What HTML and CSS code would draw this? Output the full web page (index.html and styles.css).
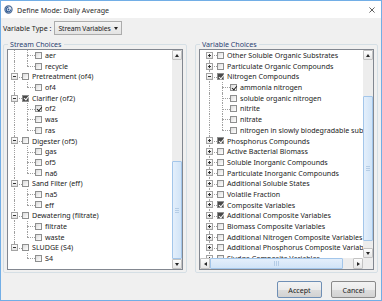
FILE: index.html
```html
<!DOCTYPE html>
<html lang="en">
<head>
  <meta charset="UTF-8">
  <meta name="viewport" content="width=device-width, initial-scale=1.0">
  <title>Define Mode: Daily Average</title>
  <link rel="stylesheet" href="styles.css">
</head>
<body>
  <div class="window">
    <div class="titlebar">
      <svg class="app-icon" viewBox="0 0 9 9">
        <circle cx="4.5" cy="4.5" r="3.6" fill="#dfe7f1" stroke="#4d6d99" stroke-width="1.2"/>
        <path d="M4.5 2.2 A2.3 2.3 0 1 0 6.8 4.5" fill="none" stroke="#2f5a94" stroke-width="1.1"/>
        <circle cx="4.5" cy="4.5" r="0.9" fill="#2f5a94"/>
      </svg>
      <span class="title">Define Mode: Daily Average</span>
      <svg class="close" viewBox="0 0 7 7">
        <path d="M0.5 0.5 L6.5 6.5 M6.5 0.5 L0.5 6.5" stroke="#333" stroke-width="0.9"/>
      </svg>
    </div>

    <div class="content">
      <div class="type-row">
        <span>Variable Type :</span>
        <div class="combo">
          <span class="combo-text">Stream Variables</span>
          <span class="combo-arrow"></span>
        </div>
      </div>

      <div class="panels">
        <fieldset class="group stream">
          <legend>Stream Choices</legend>
          <div class="listbox">
            <div class="tree">
              <div class="row"><i class="ln pass"></i><i class="ln tee"></i><b class="cb"></b><span>aer</span></div>
              <div class="row"><i class="ln pass"></i><i class="ln ell"></i><b class="cb"></b><span>recycle</span></div>
              <div class="row"><i class="ln tee"><i class="exp"></i></i><b class="cb"></b><span>Pretreatment (of4)</span></div>
              <div class="row"><i class="ln pass"></i><i class="ln ell"></i><b class="cb"></b><span>of4</span></div>
              <div class="row"><i class="ln tee"><i class="exp"></i></i><b class="cb full"></b><span>Clarifier (of2)</span></div>
              <div class="row"><i class="ln pass"></i><i class="ln tee"></i><b class="cb on"></b><span>of2</span></div>
              <div class="row"><i class="ln pass"></i><i class="ln tee"></i><b class="cb"></b><span>was</span></div>
              <div class="row"><i class="ln pass"></i><i class="ln ell"></i><b class="cb"></b><span>ras</span></div>
              <div class="row"><i class="ln tee"><i class="exp"></i></i><b class="cb"></b><span>Digester (of5)</span></div>
              <div class="row"><i class="ln pass"></i><i class="ln tee"></i><b class="cb"></b><span>gas</span></div>
              <div class="row"><i class="ln pass"></i><i class="ln tee"></i><b class="cb"></b><span>of5</span></div>
              <div class="row"><i class="ln pass"></i><i class="ln ell"></i><b class="cb"></b><span>na6</span></div>
              <div class="row"><i class="ln tee"><i class="exp"></i></i><b class="cb"></b><span>Sand Filter (eff)</span></div>
              <div class="row"><i class="ln pass"></i><i class="ln tee"></i><b class="cb"></b><span>na5</span></div>
              <div class="row"><i class="ln pass"></i><i class="ln ell"></i><b class="cb"></b><span>eff</span></div>
              <div class="row"><i class="ln tee"><i class="exp"></i></i><b class="cb"></b><span>Dewatering (filtrate)</span></div>
              <div class="row"><i class="ln pass"></i><i class="ln tee"></i><b class="cb"></b><span>filtrate</span></div>
              <div class="row"><i class="ln pass"></i><i class="ln ell"></i><b class="cb"></b><span>waste</span></div>
              <div class="row"><i class="ln ell"><i class="exp"></i></i><b class="cb"></b><span>SLUDGE (S4)</span></div>
              <div class="row"><i class="ln"></i><i class="ln ell"></i><b class="cb"></b><span>S4</span></div>
            </div>
            <div class="vscroll">
              <span class="sb-btn up"></span>
              <span class="track">
                <span class="spacer"></span>
                <span class="thumb stream-thumb"></span>
              </span>
              <span class="sb-btn down"></span>
            </div>
          </div>
        </fieldset>

        <fieldset class="group variable">
          <legend>Variable Choices</legend>
          <div class="listbox grid">
            <div class="tree indent">
              <div class="row"><i class="ln first"><i class="exp plus"></i></i><b class="cb"></b><span>Other Soluble Organic Substrates</span></div>
              <div class="row"><i class="ln tee"><i class="exp plus"></i></i><b class="cb"></b><span>Particulate Organic Compounds</span></div>
              <div class="row"><i class="ln tee"><i class="exp"></i></i><b class="cb full"></b><span>Nitrogen Compounds</span></div>
              <div class="row"><i class="ln pass"></i><i class="ln tee"></i><b class="cb on"></b><span>ammonia nitrogen</span></div>
              <div class="row"><i class="ln pass"></i><i class="ln tee"></i><b class="cb"></b><span>soluble organic nitrogen</span></div>
              <div class="row"><i class="ln pass"></i><i class="ln tee"></i><b class="cb"></b><span>nitrite</span></div>
              <div class="row"><i class="ln pass"></i><i class="ln tee"></i><b class="cb"></b><span>nitrate</span></div>
              <div class="row"><i class="ln pass"></i><i class="ln ell"></i><b class="cb"></b><span>nitrogen in slowly biodegradable substrate</span></div>
              <div class="row"><i class="ln tee"><i class="exp plus"></i></i><b class="cb full"></b><span>Phosphorus Compounds</span></div>
              <div class="row"><i class="ln tee"><i class="exp plus"></i></i><b class="cb"></b><span>Active Bacterial Biomass</span></div>
              <div class="row"><i class="ln tee"><i class="exp plus"></i></i><b class="cb"></b><span>Soluble Inorganic Compounds</span></div>
              <div class="row"><i class="ln tee"><i class="exp plus"></i></i><b class="cb"></b><span>Particulate Inorganic Compounds</span></div>
              <div class="row"><i class="ln tee"><i class="exp plus"></i></i><b class="cb"></b><span>Additional Soluble States</span></div>
              <div class="row"><i class="ln tee"><i class="exp plus"></i></i><b class="cb"></b><span>Volatile Fraction</span></div>
              <div class="row"><i class="ln tee"><i class="exp plus"></i></i><b class="cb full"></b><span>Composite Variables</span></div>
              <div class="row"><i class="ln tee"><i class="exp plus"></i></i><b class="cb full"></b><span>Additional Composite Variables</span></div>
              <div class="row"><i class="ln tee"><i class="exp plus"></i></i><b class="cb"></b><span>Biomass Composite Variables</span></div>
              <div class="row"><i class="ln tee"><i class="exp plus"></i></i><b class="cb"></b><span>Additional Nitrogen Composite Variables</span></div>
              <div class="row"><i class="ln tee"><i class="exp plus"></i></i><b class="cb"></b><span>Additional Phosphorus Composite Variables</span></div>
              <div class="row"><i class="ln tee"><i class="exp plus"></i></i><b class="cb"></b><span>Sludge Composite Variables</span></div>
            </div>
            <div class="vscroll">
              <span class="sb-btn up"></span>
              <span class="track">
                <span class="spacer var-gap"></span>
                <span class="thumb var-thumb"></span>
              </span>
              <span class="sb-btn down"></span>
            </div>
            <div class="hscroll">
              <span class="sb-btn left"></span>
              <span class="track">
                <span class="thumb h-thumb"></span>
              </span>
              <span class="sb-btn right"></span>
            </div>
            <div class="corner"></div>
          </div>
        </fieldset>
      </div>

      <div class="buttons">
        <button class="btn accept">Accept</button>
        <button class="btn">Cancel</button>
      </div>
    </div>
  </div>
</body>
</html>
```

FILE: styles.css
```css
* {
  box-sizing: border-box;
}

body {
  margin: 0;
  background: #ffffff;
  color: #1b1b1b;
  font-family: "Noto Sans", sans-serif;
  font-size: 7.1px;
}

.window {
  width: 382px;
  height: 301px;
  border: 1px solid #72aee6;
  background: #f0f0f0;
  display: flex;
  flex-direction: column;
}

/* title bar */
.titlebar {
  height: 17px;
  flex: none;
  background: #ffffff;
  display: flex;
  align-items: center;
  padding-left: 3px;
}
.app-icon {
  width: 9px;
  height: 9px;
}
.title {
  margin-left: 4px;
  color: #2b2b2b;
}
.close {
  width: 6px;
  height: 6px;
  margin-left: auto;
  margin-right: 6px;
}

.content {
  flex: 1;
  display: flex;
  flex-direction: column;
  padding-top: 3px;
}

/* variable type */
.type-row {
  display: flex;
  align-items: center;
  height: 14px;
  padding-left: 2px;
  white-space: nowrap;
}
.combo {
  margin-left: 3px;
  width: 68px;
  height: 14px;
  border: 1px solid #acacac;
  background: linear-gradient(#f4f4f4, #e3e3e3);
  display: flex;
  align-items: center;
  padding: 0 3px;
  overflow: hidden;
}
.combo-text {
  overflow: hidden;
  font-size: 6.8px;
  letter-spacing: -0.1px;
}
.combo-arrow {
  flex: none;
  margin-left: auto;
  border-left: 2.5px solid transparent;
  border-right: 2.5px solid transparent;
  border-top: 3px solid #222;
}

/* group boxes */
.panels {
  display: flex;
  gap: 8px;
  padding: 0 3px 0 2px;
  margin-top: 4px;
}
.group {
  margin: 0;
  min-width: 0;
  border: 1px solid #d5dfe5;
  border-radius: 2px;
  padding: 0 3px 2px;
}
.stream {
  width: 184px;
}
.variable {
  flex: 1;
}
.group legend {
  padding: 0 2px;
  margin-left: 1px;
  line-height: 10px;
  color: #2a4172;
}

/* list boxes */
.listbox {
  height: 221px;
  border: 1px solid #828790;
  background: #ffffff;
  display: flex;
  overflow: hidden;
}
.listbox.grid {
  display: grid;
  grid-template-columns: 1fr 10px;
  grid-template-rows: 1fr 11px;
}

.tree {
  flex: 1;
  min-width: 0;
  overflow: hidden;
  white-space: nowrap;
}
.tree.indent {
  padding-left: 3px;
}
.row {
  display: flex;
  align-items: center;
  height: 10.7px;
  line-height: 10.7px;
}
.row span {
  margin-left: 3px;
}

/* tree lines */
.ln {
  position: relative;
  flex: none;
  width: 13px;
  align-self: stretch;
}
.ln::before,
.ln::after {
  content: '';
  position: absolute;
  left: 6px;
}
.ln.pass::before,
.ln.tee::before {
  top: 0;
  bottom: 0;
  border-left: 1px dotted #a0a0a0;
}
.ln.ell::before {
  top: 0;
  height: 50%;
  border-left: 1px dotted #a0a0a0;
}
.ln.first::before {
  top: 50%;
  bottom: 0;
  border-left: 1px dotted #a0a0a0;
}
.ln.tee::after,
.ln.ell::after,
.ln.first::after {
  top: 50%;
  right: -1px;
  border-top: 1px dotted #a0a0a0;
}

.exp {
  position: absolute;
  z-index: 1;
  left: 3px;
  top: 50%;
  width: 7px;
  height: 7px;
  margin-top: -3.5px;
  border: 1px solid #a3a3a3;
  background: linear-gradient(#ffffff, #e2e2e2);
}
.exp::before {
  content: '';
  position: absolute;
  left: 1px;
  right: 1px;
  top: 2px;
  border-top: 1px solid #333;
}
.exp.plus::after {
  content: '';
  position: absolute;
  top: 1px;
  bottom: 1px;
  left: 2px;
  border-left: 1px solid #333;
}

/* checkboxes */
.cb {
  position: relative;
  flex: none;
  width: 7px;
  height: 7px;
  margin-left: 1px;
  border: 1px solid #8e8f8f;
  background: linear-gradient(135deg, #dcdcdc, #ffffff);
}
.cb.on::after,
.cb.full::after {
  content: '';
  position: absolute;
  left: 1.6px;
  top: -0.4px;
  width: 1.8px;
  height: 3.8px;
  border: solid #1c1c1c;
  border-width: 0 1.2px 1.2px 0;
  transform: rotate(40deg);
}
.cb.full {
  background: #4a4a4a;
}
.cb.full::after {
  border-color: #ffffff;
  border-width: 0 1px 1px 0;
}

/* scrollbars */
.vscroll,
.hscroll {
  display: flex;
  background: #ededed;
}
.vscroll {
  flex: none;
  width: 10px;
  flex-direction: column;
}
.hscroll {
  height: 11px;
}
.corner {
  background: #ededed;
}
.track {
  flex: 1;
  display: flex;
  flex-direction: column;
}
.hscroll .track {
  flex-direction: row;
}
.spacer {
  flex: 1;
}
.var-gap {
  flex: none;
  height: 36px;
}
.thumb {
  position: relative;
  border: 1px solid #a3c6ea;
  border-radius: 1px;
  background: linear-gradient(90deg, #e4effb, #d1e4f7);
}
.stream-thumb {
  height: 98px;
}
.var-thumb {
  height: 145px;
}
.h-thumb {
  width: 133px;
  background: linear-gradient(#e4effb, #d1e4f7);
}
.thumb::after {
  content: '';
  position: absolute;
  left: 2px;
  right: 2px;
  top: 50%;
  height: 5px;
  margin-top: -2.5px;
  background: repeating-linear-gradient(#b5cde6 0 1px, transparent 1px 2px);
}
.h-thumb::after {
  left: 50%;
  right: auto;
  width: 5px;
  margin-left: -2.5px;
  top: 2px;
  height: auto;
  bottom: 2px;
  margin-top: 0;
  background: repeating-linear-gradient(90deg, #b5cde6 0 1px, transparent 1px 2px);
}

.sb-btn {
  flex: none;
  width: 10px;
  height: 10px;
  border: 1px solid #c3c3c3;
  border-radius: 1px;
  background: linear-gradient(#fdfdfd, #e6e6e6);
  display: flex;
  align-items: center;
  justify-content: center;
}
.hscroll .sb-btn {
  height: 11px;
}
.sb-btn::before {
  content: '';
}
.sb-btn.up::before {
  border-left: 2.5px solid transparent;
  border-right: 2.5px solid transparent;
  border-bottom: 3px solid #262626;
}
.sb-btn.down::before {
  border-left: 2.5px solid transparent;
  border-right: 2.5px solid transparent;
  border-top: 3px solid #262626;
}
.sb-btn.left::before {
  border-top: 2.5px solid transparent;
  border-bottom: 2.5px solid transparent;
  border-right: 3px solid #262626;
}
.sb-btn.right::before {
  border-top: 2.5px solid transparent;
  border-bottom: 2.5px solid transparent;
  border-left: 3px solid #262626;
}

/* buttons */
.buttons {
  display: flex;
  justify-content: flex-end;
  gap: 9px;
  padding-right: 5px;
  margin-top: 8px;
}
.btn {
  width: 45px;
  height: 17px;
  padding: 0;
  border: 1px solid #8a8a8a;
  border-radius: 2px;
  background: linear-gradient(#f3f3f3, #ebebeb 50%, #dddddd 51%, #d2d2d2);
  font-family: inherit;
  font-size: inherit;
  color: #1b1b1b;
}
.btn.accept {
  border-color: #6f8fb5;
}
```
